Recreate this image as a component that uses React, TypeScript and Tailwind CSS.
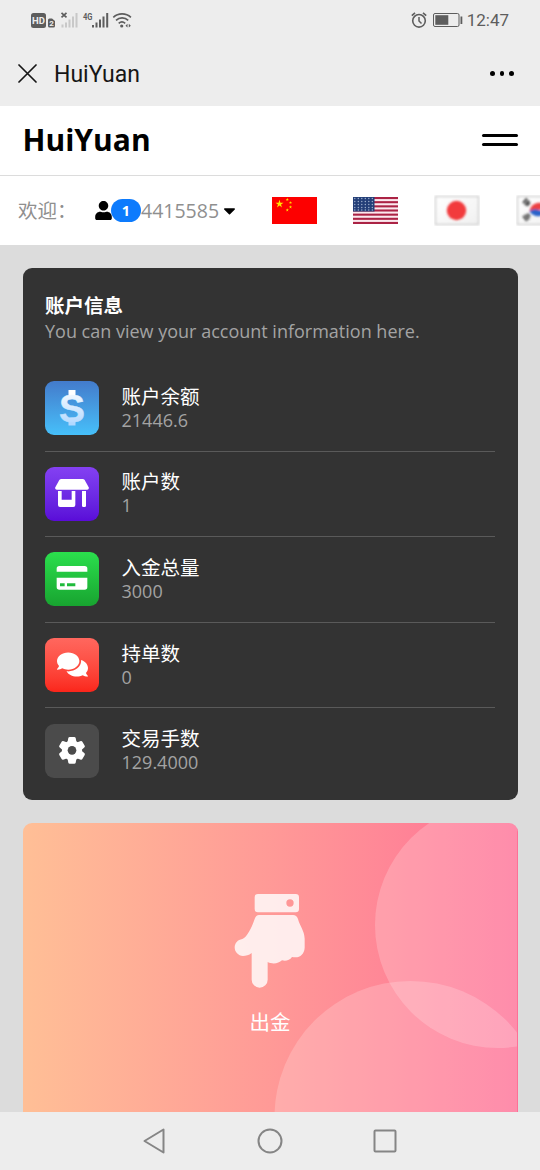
import { FaCaretDown, FaComments, FaUser } from "react-icons/fa";

const cjk = "font-['Open_Sans','Noto_Sans_CJK_SC',sans-serif]";

function StatusBar() {
  return (
    <div className="flex h-10 shrink-0 items-center justify-between pl-[30px] pr-[31px] text-[#5d5d5d]">
      <svg width="103" height="20" viewBox="0 0 103 20" fill="currentColor">
        <rect x="1" y="3" width="15" height="15" rx="2.5" />
        <text x="8.5" y="14.2" textAnchor="middle" fontSize="9.5" fontWeight="700" fontFamily="Roboto" fill="#ededed">HD</text>
        <path d="M18 10q0-1.500 1.500-1.500H22l3 2.500v5q0 1.500-1.500 1.500h-4Q18 17.500 18 16z" />
        <text x="21.500" y="16" textAnchor="middle" fontSize="8" fontWeight="700" fontFamily="Roboto" fill="#ededed">2</text>
        <path d="M31.500 2.800l5 4.500M36.500 2.800l-5 4.500" stroke="currentColor" strokeWidth="1.700" />
        <g fill="#c8c8c8">
          <rect x="31.500" y="14.500" width="2" height="3" />
          <rect x="35" y="12.500" width="2" height="5" />
          <rect x="38.500" y="9.500" width="2" height="8" />
          <rect x="42" y="6.500" width="2" height="11" />
          <rect x="45.500" y="3" width="2" height="14.500" />
        </g>
        <text x="53" y="9.500" fontSize="9" fontWeight="700" fontFamily="Roboto" textLength="9.500" lengthAdjust="spacingAndGlyphs">4G</text>
        <rect x="62" y="15" width="2" height="2.500" />
        <rect x="65.500" y="12.500" width="2" height="5" />
        <rect x="69" y="9.500" width="2" height="8" />
        <rect x="72.500" y="6.500" width="2" height="11" />
        <rect x="76.200" y="3" width="2" height="14.500" />
        <g fill="none" stroke="currentColor" strokeWidth="1.700">
          <path d="M83.300 7.300a13 13 0 0 1 17.600 0" />
          <path d="M86 10.300a9 9 0 0 1 12.200 0" />
          <path d="M88.700 13.300a5 5 0 0 1 6.500 0" />
        </g>
        <circle cx="91.700" cy="16" r="1.600" />
        <path d="M97.500 13.800v3.800l-2-1.900zM98.800 13.800v3.800l2-1.900z" />
      </svg>
      <div className="flex items-center">
        <svg width="52" height="18" viewBox="0 0 52 18" fill="none" stroke="currentColor">
          <circle cx="8" cy="9.800" r="6.300" strokeWidth="1.600" />
          <path d="M8 6v4l2.500 2.500" strokeWidth="1.500" />
          <path d="M.8 4.700L4 1.800M15.200 4.700L12 1.800" strokeWidth="1.600" />
          <rect x="22.500" y="2.500" width="25.500" height="13" rx="1.500" strokeWidth="1" />
          <rect x="24.300" y="4.200" width="13" height="9.600" fill="currentColor" stroke="none" />
          <rect x="49.500" y="5.500" width="1.800" height="7.500" fill="currentColor" stroke="none" />
        </svg>
        <span className="ml-[4px] font-['Roboto',sans-serif] text-[17px] leading-5">12:47</span>
      </div>
    </div>
  );
}

function TitleBar() {
  return (
    <div className="flex h-[66px] shrink-0 items-center pl-[18px] pr-[26px] pt-px">
      <svg width="19" height="19" viewBox="0 0 19 19" stroke="#161616" strokeWidth="1.700" strokeLinecap="round">
        <path d="M1 1l17 17M18 1L1 18" />
      </svg>
      <span className="ml-[17px] pt-[3px] font-['Roboto',sans-serif] text-[23px] text-[#161616]">HuiYuan</span>
      <div className="ml-auto flex gap-[5px]">
        <span className="size-[4.700px] rounded-full bg-black" />
        <span className="size-[4.700px] rounded-full bg-black" />
        <span className="size-[4.700px] rounded-full bg-black" />
      </div>
    </div>
  );
}

function ChinaFlag() {
  const star = "M0-1L.225-.31H.951L.363.118.588.809 0 .382-.588.809-.363.118-.951-.31H-.225z";
  return (
    <svg width="45" height="27" viewBox="0 0 45 27">
      <rect width="45" height="27" fill="#fd0000" />
      <g fill="#ffe600">
        <path d={star} transform="translate(7.500 7) scale(4.200)" />
        <path d={star} transform="translate(15.300 2.500) scale(1.700)" />
        <path d={star} transform="translate(18.500 5.700) scale(1.700)" />
        <path d={star} transform="translate(18.500 10) scale(1.700)" />
        <path d={star} transform="translate(15.300 13) scale(1.700)" />
      </g>
    </svg>
  );
}

function UsaFlag() {
  const stripes = [0, 2, 4, 6, 8, 10, 12];
  const rows = [1.500, 4.500, 7.500, 10.500, 13];
  const cols = [1.800, 5.300, 8.800, 12.300, 15.800, 19.300];
  return (
    <svg width="45" height="27" viewBox="0 0 45 27">
      <rect width="45" height="27" fill="#fbe9ee" />
      {stripes.map((s) => (
        <rect key={s} y={s * 2.077} width="45" height="2.077" fill="#ab2345" />
      ))}
      <rect width="21.500" height="14.500" fill="#243f78" />
      {rows.map((y) => cols.map((x) => <circle key={`${x}-${y}`} cx={x} cy={y} r=".65" fill="#a9bbd6" />))}
    </svg>
  );
}

function JapanFlag() {
  return (
    <svg width="46" height="31" viewBox="0 0 46 31">
      <defs>
        <linearGradient id="paper" x1="0" y1="0" x2="1" y2="1">
          <stop offset="0" stopColor="#fff" />
          <stop offset="1" stopColor="#f0f0f0" />
        </linearGradient>
        <filter id="soft" x="-10%" y="-10%" width="120%" height="120%">
          <feGaussianBlur stdDeviation=".9" />
        </filter>
      </defs>
      <rect x="1.500" y="1.500" width="43" height="28" fill="url(#paper)" stroke="#cfcfcf" strokeWidth="1.500" filter="url(#soft)" />
      <circle cx="22.500" cy="15.500" r="9.700" fill="#f23a3d" filter="url(#soft)" />
    </svg>
  );
}

function KoreaFlag() {
  return (
    <svg className="shrink-0" width="46" height="31" viewBox="0 0 46 31">
      <rect x="1.500" y="1.500" width="43" height="28" fill="url(#paper)" stroke="#cfcfcf" strokeWidth="1.500" filter="url(#soft)" />
      <g filter="url(#soft)">
        <path d="M13.500 17a9.500 9.500 0 0 1 18-4z" fill="#ed4143" />
        <path d="M13.500 16q5-3 9-1t9-3a9.500 9.500 0 0 1-18 4" fill="#2c62c9" />
        <g stroke="#444" strokeWidth="1.900">
          <path d="M7 8l4-4.500M9 10l4-4.500M11 11l3-3.500" />
          <path d="M7 21l4 5M9 19.500l4 5M11.500 18.500l2.500 3.500" />
        </g>
      </g>
    </svg>
  );
}

function DollarIcon() {
  return (
    <svg width="54" height="54" viewBox="0 0 54 54">
      <defs>
        <linearGradient id="dollar" x1="0" y1="0" x2="0" y2="1">
          <stop offset="0" stopColor="#fff" />
          <stop offset="1" stopColor="#a9d4ff" />
        </linearGradient>
      </defs>
      <rect x="23.500" y="9" width="7" height="6" fill="#fff" />
      <rect x="23.500" y="39" width="7" height="5.500" fill="#b1d8ff" />
      <text x="27" y="41" textAnchor="middle" fontSize="39" fontWeight="700" fontFamily="Liberation Sans" fill="url(#dollar)" stroke="url(#dollar)" strokeWidth=".5">S</text>
    </svg>
  );
}

function StoreIcon() {
  return (
    <svg width="54" height="54" viewBox="0 0 162 162" fill="#fff">
      <path d="M49 36h64q4 0 6 3l12 22q2 7-5 7H36q-7 0-5-7l12-22q2-3 6-3z" />
      <path d="M39 72h11v26h30V72h11v42q0 6-6 6H45q-6 0-6-6zM111 72h12v44q0 4-4 4h-4q-4 0-4-4z" />
    </svg>
  );
}

function CardIcon() {
  return (
    <svg width="54" height="54" viewBox="0 0 162 162" fill="#fff">
      <path d="M43 42h76q8 0 8 8v9H35v-9q0-8 8-8z" />
      <path fillRule="evenodd" d="M35 77h92v28q0 8-8 8H43q-8 0-8-8zM45 94v9h14v-9zM66 94v9h25v-9z" />
    </svg>
  );
}

function GearIcon() {
  const teeth = [0, 60, 120, 180, 240, 300];
  return (
    <svg width="54" height="54" viewBox="-81 -82 162 162" fill="#fff">
      {teeth.map((t) => (
        <path key={t} d="M-14-22L-11-37q1-3 4-3H7q3 0 4 3L14-22z" transform={`translate(0 -3) rotate(${t})`} />
      ))}
      <circle cy="-3" r="30" />
      <circle cy="-3" r="13" fill="#4b4b4b" />
    </svg>
  );
}

function HandIcon() {
  return (
    <svg width="74" height="97" viewBox="70 68 222 291" fill="#fff" fillOpacity=".82">
      <path fillRule="evenodd" d="M145 71h113q10 0 10 10v35q0 10-10 10H145q-10 0-10-10V81q0-10 10-10zM241 87a11 11 0 1 0 0 22 11 11 0 0 0 0-22z" />
      <path d="M148 134H250Q261 134 265 146C270 167 284 180 285 205V232C284 250 272 261 258 261C254 261 250 261 247 260C240 270 228 273 217 270C207 279 190 283 174 275V328A24 24 0 0 1 126 328V248C118 255 108 257 100 257C86 256 75 246 75 231C75 219 84 208 98 206C112 200 125 175 135 146Q139 134 148 134Z" />
    </svg>
  );
}

const items = [
  { title: "账户余额", value: "21446.6", bg: "bg-linear-to-b from-[#437bcb] to-[#46c0fa]", icon: <DollarIcon /> },
  { title: "账户数", value: "1", bg: "bg-linear-to-b from-[#8440f2] to-[#5a0bd8]", icon: <StoreIcon /> },
  { title: "入金总量", value: "3000", bg: "bg-linear-to-b from-[#2bdf4d] to-[#18a430]", icon: <CardIcon /> },
  { title: "持单数", value: "0", bg: "bg-linear-to-b from-[#ff675e] to-[#fb251a]", icon: <FaComments size={31} className="-mt-px" color="#fff" /> },
  { title: "交易手数", value: "129.4000", bg: "bg-[#4b4b4b]", icon: <GearIcon /> },
];

export default function App() {
  return (
    <div className={`flex h-[1170px] w-[540px] flex-col overflow-hidden bg-[#ededed] ${cjk}`}>
      <StatusBar />
      <TitleBar />

      {/* Site header */}
      <header className="flex h-[70px] shrink-0 items-center justify-between border-b border-[#dcdcdc] bg-white px-[22.500px] pb-[2px]">
        <h1 className="text-[30px] font-bold leading-none text-black">HuiYuan</h1>
        <div className="flex w-[36px] flex-col gap-[6px]">
          <span className="h-[3px] rounded-full bg-black" />
          <span className="h-[3px] rounded-full bg-black" />
        </div>
      </header>

      {/* Account switcher and languages */}
      <div className="flex h-[69px] shrink-0 items-center overflow-hidden bg-white pl-[18px] text-[19.500px] text-[#8f8f8f]">
        <span className="w-[75.500px] shrink-0">欢迎：</span>
        <FaUser className="shrink-0 text-black" size={19} />
        <span className="-ml-[1.500px] flex h-[23px] w-[30px] shrink-0 items-center justify-center rounded-full bg-[#0d7bfd] text-[14.500px] font-bold text-white">1</span>
        <span className="text-[19.500px]">4415585</span>
        <FaCaretDown className="ml-[1px] shrink-0 text-black" size={19} />
        <div className="ml-[32.500px] flex shrink-0 items-center gap-[36px]">
          <ChinaFlag />
          <UsaFlag />
          <JapanFlag />
          <KoreaFlag />
        </div>
      </div>

      <main className="flex min-h-0 flex-1 flex-col gap-[23px] overflow-hidden bg-[#dcdcdc] px-[22.500px] pt-[22.500px]">
        {/* Account info */}
        <section className="h-[532px] shrink-0 rounded-[9px] bg-[#333] px-[22.500px] pt-[24px]">
          <h2 className="text-[19.500px] font-bold leading-[27px] text-white">账户信息</h2>
          <p className="text-[18px] leading-[25px] text-[#a3a3a3]">You can view your account information here.</p>
          <ul className="mt-[22.500px]">
            {items.map((item) => (
              <li key={item.title} className="flex h-[85.600px] items-center gap-[22.500px] border-b border-[#5a5a5a] last:border-transparent">
                <div className={`flex size-[54px] shrink-0 items-center justify-center overflow-hidden rounded-[9px] ${item.bg}`}>
                  {item.icon}
                </div>
                <div className="pb-px">
                  <div className="text-[19.500px] leading-[25px] text-white">{item.title}</div>
                  <div className="text-[18px] leading-[23px] text-[#a3a3a3]">{item.value}</div>
                </div>
              </li>
            ))}
          </ul>
        </section>

        {/* Withdraw */}
        <section className="relative flex h-[400px] shrink-0 flex-col items-center overflow-hidden rounded-[9px] bg-linear-to-r from-[#ffbf96] to-[#fe7096] pt-[70px]">
          <svg className="absolute inset-0" width="494" height="400" viewBox="0 0 494 400" fill="#fff" fillOpacity=".2">
            <circle cx="475" cy="102" r="123" />
            <circle cx="387.500" cy="294" r="136" />
          </svg>
          <HandIcon />
          <span className="mt-[17px] text-[20.500px] leading-[30px] text-white">出金</span>
        </section>
      </main>

      {/* Android navigation */}
      <nav className="flex h-[58px] shrink-0 items-center justify-center gap-[90px]">
        <svg width="24" height="26" viewBox="0 0 24 26" fill="none" stroke="#858585" strokeWidth="2" strokeLinejoin="round">
          <path d="M1.500 13L20.500 1.500v23z" />
        </svg>
        <svg width="26" height="26" viewBox="0 0 26 26" fill="none" stroke="#858585" strokeWidth="2">
          <circle cx="13" cy="13" r="11.500" />
        </svg>
        <svg width="24" height="24" viewBox="0 0 24 24" fill="none" stroke="#858585" strokeWidth="2">
          <rect x="1.500" y="1.500" width="21" height="21" rx="1" />
        </svg>
      </nav>
    </div>
  );
}
